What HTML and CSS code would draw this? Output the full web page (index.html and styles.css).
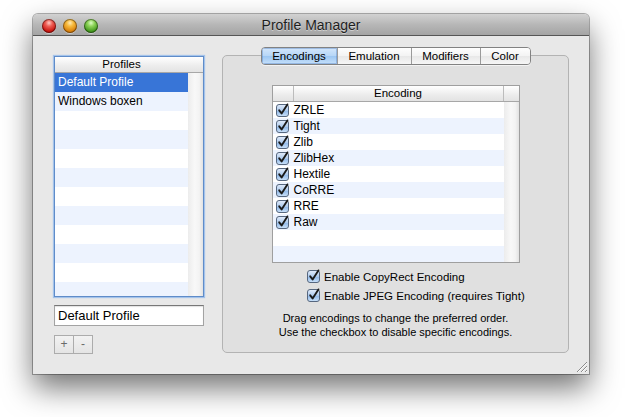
FILE: index.html
```html
<!DOCTYPE html>
<html>
<head>
<meta charset="utf-8">
<title>Profile Manager</title>
<link rel="stylesheet" href="styles.css">
</head>
<body>
<div class="window">
  <div class="titlebar">
    <div class="lights">
      <span class="light red"></span>
      <span class="light yellow"></span>
      <span class="light green"></span>
    </div>
    <div class="title">Profile Manager</div>
    <div></div>
  </div>
  <div class="content">
    <div class="left">
      <div class="list">
        <div class="list-header"><span class="lh-main">Profiles</span><span class="lh-corner"></span></div>
        <div class="list-body">
          <div class="rows">
            <div class="row sel">Default Profile</div>
            <div class="row">Windows boxen</div>
            <div class="row"></div>
            <div class="row"></div>
            <div class="row"></div>
            <div class="row"></div>
            <div class="row"></div>
            <div class="row"></div>
            <div class="row"></div>
            <div class="row"></div>
            <div class="row"></div>
            <div class="row"></div>
          </div>
          <div class="scroller"></div>
        </div>
      </div>
      <div class="textfield">Default Profile</div>
      <div class="pm"><span class="pmb">+</span><span class="pmb">-</span></div>
    </div>
    <div class="tabbox">
      <div class="tabs">
        <span class="tab on t1">Encodings</span>
        <span class="tab t2">Emulation</span>
        <span class="tab t3">Modifiers</span>
        <span class="tab t4">Color</span>
      </div>
      <div class="table">
        <div class="thead"><span class="th-chk"></span><span class="th-main">Encoding</span><span class="th-corner"></span></div>
        <div class="tbody">
          <div class="trows">
            <div class="trow"><svg class="cb" viewBox="0 0 11 11"><path d="M2.2 5.3 L4.6 8.4 L10.4 -0.6"/></svg>ZRLE</div>
            <div class="trow"><svg class="cb" viewBox="0 0 11 11"><path d="M2.2 5.3 L4.6 8.4 L10.4 -0.6"/></svg>Tight</div>
            <div class="trow"><svg class="cb" viewBox="0 0 11 11"><path d="M2.2 5.3 L4.6 8.4 L10.4 -0.6"/></svg>Zlib</div>
            <div class="trow"><svg class="cb" viewBox="0 0 11 11"><path d="M2.2 5.3 L4.6 8.4 L10.4 -0.6"/></svg>ZlibHex</div>
            <div class="trow"><svg class="cb" viewBox="0 0 11 11"><path d="M2.2 5.3 L4.6 8.4 L10.4 -0.6"/></svg>Hextile</div>
            <div class="trow"><svg class="cb" viewBox="0 0 11 11"><path d="M2.2 5.3 L4.6 8.4 L10.4 -0.6"/></svg>CoRRE</div>
            <div class="trow"><svg class="cb" viewBox="0 0 11 11"><path d="M2.2 5.3 L4.6 8.4 L10.4 -0.6"/></svg>RRE</div>
            <div class="trow"><svg class="cb" viewBox="0 0 11 11"><path d="M2.2 5.3 L4.6 8.4 L10.4 -0.6"/></svg>Raw</div>
            <div class="trow"></div>
            <div class="trow"></div>
          </div>
          <div class="scroller"></div>
        </div>
      </div>
      <div class="options">
        <div class="opt"><svg class="cb" viewBox="0 0 11 11"><path d="M2.2 5.3 L4.6 8.4 L10.4 -0.6"/></svg>Enable CopyRect Encoding</div>
        <div class="opt"><svg class="cb" viewBox="0 0 11 11"><path d="M2.2 5.3 L4.6 8.4 L10.4 -0.6"/></svg>Enable JPEG Encoding (requires Tight)</div>
      </div>
      <p class="help">Drag encodings to change the preferred order.<br>Use the checkbox to disable specific encodings.</p>
    </div>
  </div>
  <svg class="grip" viewBox="0 0 11 11" width="11" height="11">
    <path d="M1 11 L11 1 M5 11 L11 5 M9 11 L11 9" stroke="#8a8a8a" stroke-width="1"/>
    <path d="M2 11 L11 2 M6 11 L11 6 M10 11 L11 10" stroke="#fafafa" stroke-width="1"/>
  </svg>
</div>
</body>
</html>
```
FILE: styles.css
```css
html {
  height: 100%;
  background: #ffffff;
}
body {
  margin: 0;
  min-height: 100%;
  padding-top: 14px;
  box-sizing: border-box;
  background: #ffffff;
  font-family: "Liberation Sans", Arial, sans-serif;
  color: #000;
}
.window {
  position: relative;
  margin: 0 0 0 33px;
  width: 556px;
  height: 360px;
  background: #e8e8e8;
  border-radius: 5px 5px 0 0;
  box-shadow: 0 0 0 1px rgba(0,0,0,0.3), 0 14px 30px rgba(0,0,0,0.55);
  display: flex;
  flex-direction: column;
}
.titlebar {
  height: 21px;
  border-bottom: 1px solid #565656;
  border-radius: 5px 5px 0 0;
  background: linear-gradient(#d2d2d2, #b7b7b7 50%, #a4a4a4);
  display: grid;
  grid-template-columns: 1fr auto 1fr;
  align-items: center;
}
.lights {
  display: flex;
  gap: 7px;
  padding-left: 9px;
  padding-top: 2px;
}
.light {
  width: 14px;
  height: 14px;
  border-radius: 50%;
  box-sizing: border-box;
  box-shadow: inset 0 0 0 1px rgba(0,0,0,0.4), 0 1px 0 rgba(255,255,255,0.4);
}
.light.red {
  background: radial-gradient(circle at 50% 28%, #ffc9c3 0, #ee5e55 28%, #c9150f 68%, #960b08 100%);
}
.light.yellow {
  background: radial-gradient(circle at 50% 28%, #ffe9b5 0, #f7bb3e 28%, #d9800b 68%, #a95a06 100%);
}
.light.green {
  background: radial-gradient(circle at 50% 28%, #dcfcc6 0, #8fd55a 28%, #44991e 68%, #2a700f 100%);
}
.title {
  font-size: 14px;
  color: #1e1e1e;
  padding-top: 1px;
  text-shadow: 0 1px 0 rgba(255,255,255,0.45);
}
.content {
  flex: 1;
  display: flex;
  gap: 18px;
  padding: 20px 0 0 21px;
}
.left {
  width: 150px;
  display: flex;
  flex-direction: column;
}
.list {
  height: 241px;
  box-sizing: border-box;
  border: 1px solid #5f8cc9;
  box-shadow: 0 0 1px 1px #a4c3ea;
  background: #fff;
  display: flex;
  flex-direction: column;
  overflow: hidden;
}
.list-header {
  height: 15px;
  flex: none;
  display: flex;
  border-bottom: 1px solid #a7a7a7;
  background: linear-gradient(#ffffff, #ececec 60%, #e3e3e3);
  font-size: 11.5px;
  line-height: 15px;
}
.lh-main {
  flex: 1;
  text-align: center;
}
.lh-corner {
  width: 15px;
}
.list-body {
  flex: 1;
  display: flex;
  min-height: 0;
}
.rows {
  flex: 1;
  overflow: hidden;
}
.row {
  height: 19px;
  line-height: 19px;
  font-size: 12px;
  padding-left: 3px;
  white-space: nowrap;
}
.row:nth-child(even) {
  background: #edf3fe;
}
.row.sel {
  background: #3875d7;
  color: #fff;
}
.scroller {
  width: 15px;
  flex: none;
  background: linear-gradient(to right, #ececec, #f8f8f8 45%, #f3f3f3 75%, #e2e2e2);
}
.textfield {
  margin-top: 8px;
  height: 21px;
  box-sizing: border-box;
  border: 1px solid #a3a3a3;
  border-top-color: #777;
  background: #fff;
  font-size: 13px;
  line-height: 19px;
  padding-left: 3px;
  box-shadow: inset 0 1px 1px rgba(0,0,0,0.12);
}
.pm {
  margin-top: 9px;
  display: flex;
}
.pmb {
  width: 20px;
  height: 19px;
  box-sizing: border-box;
  border: 1px solid #acacac;
  background: linear-gradient(#f2f2f2, #e4e4e4);
  color: #6a6a6a;
  font-size: 12px;
  line-height: 16px;
  text-align: center;
}
.pmb + .pmb {
  width: 19px;
  border-left: none;
}
.tabbox {
  width: 347px;
  height: 298px;
  box-sizing: border-box;
  margin-top: -1px;
  border: 1px solid #b3b3b3;
  border-radius: 5px;
  background: #e0e0e0;
  display: flex;
  flex-direction: column;
}
.tabs {
  margin: -9px auto 0;
  height: 18px;
  box-sizing: border-box;
  display: flex;
  border: 1px solid #828282;
  border-radius: 4px;
  overflow: hidden;
  box-shadow: 0 1px 0 rgba(255,255,255,0.6);
}
.tab {
  box-sizing: border-box;
  font-size: 11.5px;
  line-height: 16px;
  text-align: center;
  background: linear-gradient(#fefefe, #f3f3f3 50%, #e8e8e8 51%, #f6f6f6);
}
.tab + .tab {
  border-left: 1px solid #9b9b9b;
}
.tab.on {
  background: linear-gradient(#d3e6fb, #b6d6f7 50%, #9cc6f2 51%, #c6e1fb);
  box-shadow: inset 0 0 0 1px rgba(60,110,180,0.35);
}
.t1 { width: 75px; }
.t2 { width: 74px; }
.t3 { width: 69px; }
.t4 { width: 50px; }
.table {
  width: 248px;
  margin: 20px auto 0;
  box-sizing: border-box;
  border: 1px solid #9f9f9f;
  background: #fff;
}
.thead {
  height: 15px;
  display: flex;
  border-bottom: 1px solid #a7a7a7;
  background: linear-gradient(#ffffff, #ececec 60%, #e3e3e3);
  font-size: 11.5px;
  line-height: 15px;
}
.th-chk {
  width: 21px;
  box-sizing: border-box;
  border-right: 1px solid #bcbcbc;
}
.th-main {
  flex: 1;
  text-align: center;
  border-right: 1px solid #bcbcbc;
}
.th-corner {
  width: 15px;
}
.tbody {
  height: 160px;
  display: flex;
}
.trows {
  flex: 1;
}
.trow {
  height: 16px;
  display: flex;
  align-items: center;
  gap: 5px;
  padding-left: 3px;
  font-size: 12px;
}
.trow:nth-child(even) {
  background: #edf3fe;
}
.cb {
  width: 13px;
  height: 13px;
  flex: none;
  box-sizing: border-box;
  border: 1px solid #56677f;
  border-radius: 3px;
  background: linear-gradient(#dfeafa, #aecbee 50%, #8db6e8 51%, #c7dff8);
  overflow: visible;
}
.cb path {
  fill: none;
  stroke: #1a1a1a;
  stroke-width: 1.9;
  stroke-linecap: round;
  stroke-linejoin: round;
}
.options {
  margin-top: 4px;
  padding-left: 84px;
}
.opt {
  height: 19px;
  display: flex;
  align-items: center;
  gap: 4px;
  font-size: 11.5px;
}
.help {
  margin: 6px 0 0;
  text-align: center;
  font-size: 11px;
  line-height: 14px;
}
.grip {
  position: absolute;
  right: 2px;
  bottom: 2px;
}
```
